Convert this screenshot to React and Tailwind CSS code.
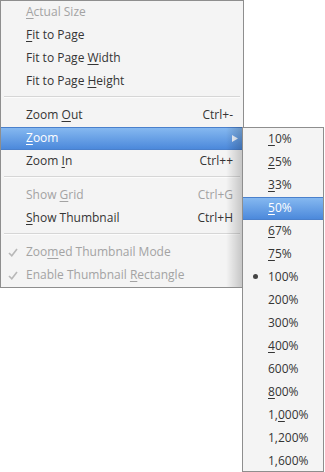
import React from 'react';

const font = { fontFamily: '"Open Sans", "Noto Sans", sans-serif' };

// label with one underlined mnemonic char, split as [before, key, after]
function Label({ parts }) {
  if (typeof parts === 'string') return <span>{parts}</span>;
  const [a, k, b] = parts;
  return (
    <span>
      {a}
      <span className="underline underline-offset-2 decoration-1">{k}</span>
      {b}
    </span>
  );
}

function Check() {
  return (
    <svg className="absolute left-[7px] top-[7px] w-[10px] h-[9px]" viewBox="0 0 10 9">
      <polyline points="1,5 3.8,7.8 9,1" fill="none" stroke="#b8b8b8" strokeWidth="1.6" />
    </svg>
  );
}

const mainItems = [
  { label: ['', 'A', 'ctual Size'], disabled: true },
  { label: ['', 'F', 'it to Page'] },
  { label: ['Fit to Page ', 'W', 'idth'] },
  { label: ['Fit to Page ', 'H', 'eight'] },
  { sep: true },
  { label: ['Zoom ', 'O', 'ut'], key: 'Ctrl+-' },
  { label: ['', 'Z', 'oom'], active: true, sub: true },
  { label: ['Zoom ', 'I', 'n'], key: 'Ctrl++' },
  { sep: true },
  { label: ['Show ', 'G', 'rid'], key: 'Ctrl+G', disabled: true },
  { label: ['', 'S', 'how Thumbnail'], key: 'Ctrl+H' },
  { sep: true },
  { label: ['Zoo', 'm', 'ed Thumbnail Mode'], disabled: true, checked: true },
  { label: ['Enable Thumbnail ', 'R', 'ectangle'], disabled: true, checked: true },
];

const zoomItems = [
  ['', '1', '0%'],
  ['', '2', '5%'],
  ['', '3', '3%'],
  { label: ['', '5', '0%'], active: true },
  ['', '6', '7%'],
  ['', '7', '5%'],
  { label: '100%', bullet: true },
  '200%',
  '300%',
  ['', '4', '00%'],
  '600%',
  ['', '8', '00%'],
  ['1,', '0', '00%'],
  '1,200%',
  '1,600%',
];

function Row({ item }) {
  const color = item.active
    ? 'text-white bg-gradient-to-b from-[#85b8f0] to-[#4c89db] border-y border-[#4a80cc]'
    : item.disabled
    ? 'text-[#a3a3a3]'
    : 'text-[#353535]';
  return (
    <div className={`relative h-[23px] flex items-center pb-px pl-[25px] pr-[10px] ${color}`}>
      {item.checked && <Check />}
      <Label parts={item.label} />
      {item.key && <span className="ml-auto">{item.key}</span>}
      {item.sub && (
        <svg className="ml-auto mr-[-5px] w-[6px] h-[7px]" viewBox="0 0 6 7">
          <polygon points="0,0 6,3.5 0,7" fill="#eef5ff" />
        </svg>
      )}
    </div>
  );
}

export default function App() {
  return (
    <div className="relative w-[325px] h-[472px] bg-white text-[12px] leading-none" style={font}>
      {/* Main menu */}
      <div className="relative w-[244px] bg-[#f4f4f4] border border-[#8e8e8e]">
        {mainItems.map((item, i) =>
          item.sep ? (
            <div key={i} className="h-[11px] pt-[3px] px-[3px]">
              <div className="h-px bg-[#d6d6d6]" />
              <div className="h-px bg-white/70" />
            </div>
          ) : (
            <Row key={i} item={item} />
          )
        )}
        {/* shadow from submenu */}
        <div className="absolute right-0 top-[126px] bottom-0 w-[17px] bg-gradient-to-r from-transparent to-black/20 pointer-events-none" />
      </div>

      {/* Zoom submenu */}
      <div className="absolute left-[242px] top-[127px] w-[82px] h-[345px] overflow-hidden bg-[#f4f4f4] border border-[#8e8e8e]">
        {zoomItems.map((z, i) => {
          const item = Array.isArray(z) || typeof z === 'string' ? { label: z } : z;
          return (
            <div
              key={i}
              className={`relative h-[23px] flex items-center pb-px pl-[25px] ${
                item.active
                  ? 'text-white bg-gradient-to-b from-[#85b8f0] to-[#4c89db] border-y border-[#4a80cc]'
                  : 'text-[#353535]'
              }`}
            >
              {item.bullet && <span className="absolute left-[10px] top-[8px] w-[5px] h-[5px] rounded-full bg-[#444]" />}
              <Label parts={item.label} />
            </div>
          );
        })}
      </div>
    </div>
  );
}
